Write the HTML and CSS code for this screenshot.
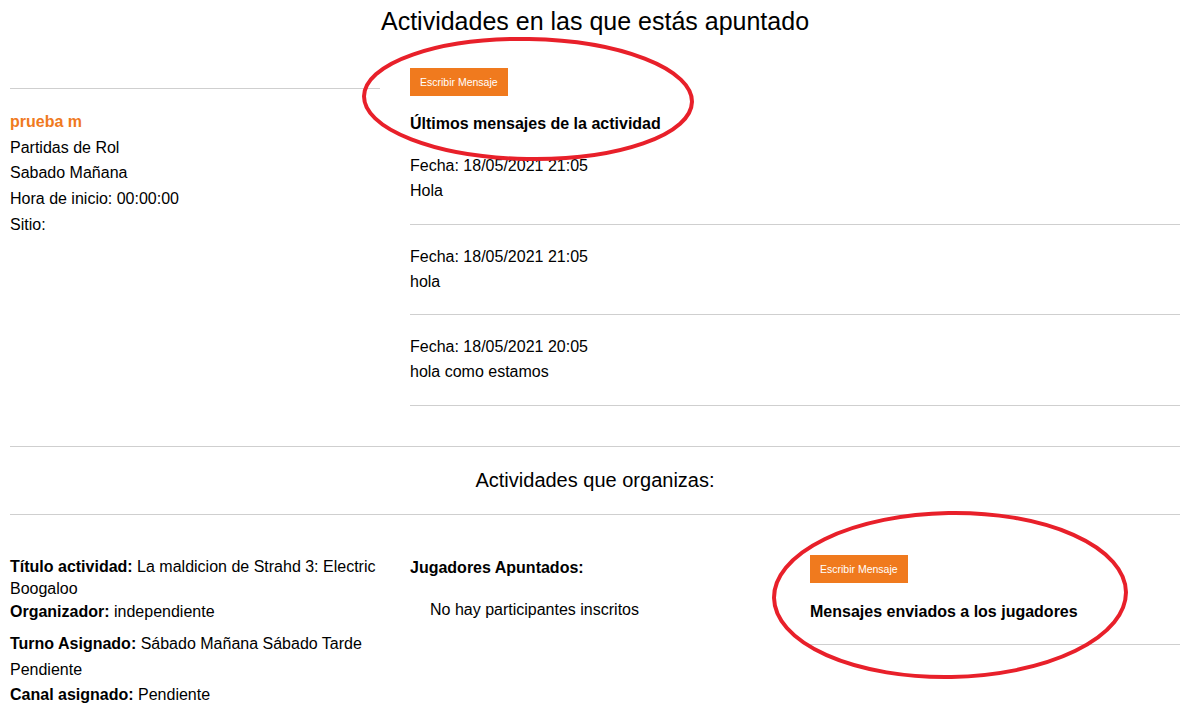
FILE: index.html
```html
<!DOCTYPE html>
<html lang="es">
<head>
<meta charset="utf-8">
<title>Actividades</title>
<link rel="stylesheet" href="styles.css">
</head>
<body>
<div class="page">
  <h1 class="title">Actividades en las que estás apuntado</h1>

  <div class="row-top">
    <div class="col-left">
      <hr class="rule left-rule">
      <div class="info">
        <div class="name">prueba m</div>
        <div>Partidas de Rol</div>
        <div>Sabado Mañana</div>
        <div>Hora de inicio: 00:00:00</div>
        <div>Sitio:</div>
      </div>
    </div>
    <div class="col-right">
      <button class="btn btn-top">Escribir Mensaje</button>
      <h3 class="subhead">Últimos mensajes de la actividad</h3>
      <div class="messages">
        <div class="msg"><div>Fecha: 18/05/2021 21:05</div><div>Hola</div></div>
        <div class="msg"><div>Fecha: 18/05/2021 21:05</div><div>hola</div></div>
        <div class="msg"><div>Fecha: 18/05/2021 20:05</div><div>hola como estamos</div></div>
      </div>
    </div>
  </div>

  <hr class="rule full-rule">
  <h2 class="section-title">Actividades que organizas:</h2>
  <hr class="rule">

  <div class="row-bottom">
    <div class="col3 details">
      <div class="tight"><b>Título actividad:</b> La maldicion de Strahd 3: Electric Boogaloo</div>
      <div class="tight"><b>Organizador:</b> independiente</div>
      <div class="loose">
        <div><b>Turno Asignado:</b> Sábado Mañana Sábado Tarde</div>
        <div>Pendiente</div>
        <div><b>Canal asignado:</b> Pendiente</div>
      </div>
    </div>
    <div class="col3 players">
      <div class="subhead players-head">Jugadores Apuntados:</div>
      <div class="none">No hay participantes inscritos</div>
    </div>
    <div class="col3 sent">
      <button class="btn btn-bottom">Escribir Mensaje</button>
      <div class="subhead sent-head">Mensajes enviados a los jugadores</div>
      <hr class="rule sent-rule">
    </div>
  </div>
</div>

<svg class="annot" width="1192" height="714" viewBox="0 0 1192 714" aria-hidden="true">
  <ellipse cx="528" cy="99" rx="164" ry="60" fill="none" stroke="#e8202a" stroke-width="4" transform="rotate(1 528 99)"/>
  <ellipse cx="950" cy="595" rx="176" ry="82" fill="none" stroke="#e8202a" stroke-width="4" transform="rotate(-1 950 595)"/>
</svg>
</body>
</html>
```

FILE: styles.css
```css
html, body {
  margin: 0;
  padding: 0;
  background: #fff;
}

body {
  font-family: "Liberation Sans", Arial, sans-serif;
  font-size: 16px;
  color: #000;
  position: relative;
}

.page {
  width: 1170px;
  margin-left: 10px;
}

.title {
  margin: 8px 0 0;
  font-size: 25px;
  line-height: 26px;
  font-weight: normal;
  text-align: center;
}

.rule {
  border: 0;
  border-top: 1px solid #cfcfcf;
  margin: 0;
  height: 0;
}

.row-top {
  display: grid;
  grid-template-columns: 370px 770px;
  column-gap: 30px;
}

.left-rule {
  margin-top: 54px;
}

.info {
  margin-top: 20px;
  line-height: 25.7px;
}

.name {
  color: #f07a1e;
  font-weight: bold;
}

.btn {
  display: block;
  height: 28px;
  padding: 0 10px;
  border: 0;
  background: #f07a1e;
  color: #fff;
  font-family: "Liberation Sans", Arial, sans-serif;
  font-size: 10.5px;
  cursor: pointer;
}

.btn-top {
  margin-top: 34px;
}

.subhead {
  margin: 18px 0 0;
  font-size: 16px;
  line-height: 20px;
  font-weight: bold;
}

.msg {
  padding: 19px 0 20.5px;
  line-height: 25px;
  border-bottom: 1px solid #cfcfcf;
}

.full-rule {
  margin-top: 40px;
}

.section-title {
  margin: 21px 0 22px;
  font-size: 20px;
  line-height: 24px;
  font-weight: normal;
  text-align: center;
}

.row-bottom {
  display: grid;
  grid-template-columns: 370px 370px 370px;
  column-gap: 30px;
}

.details {
  padding-top: 41px;
}

.tight {
  line-height: 22.5px;
}

.loose {
  margin-top: 8px;
  line-height: 25.6px;
}

.players-head {
  margin-top: 43px;
}

.none {
  margin-top: 22px;
  padding-left: 20px;
  line-height: 20px;
}

.btn-bottom {
  margin-top: 40px;
}

.sent-head {
  margin-top: 19px;
}

.sent-rule {
  margin-top: 22px;
}

.annot {
  position: absolute;
  left: 0;
  top: 0;
  pointer-events: none;
}
```
